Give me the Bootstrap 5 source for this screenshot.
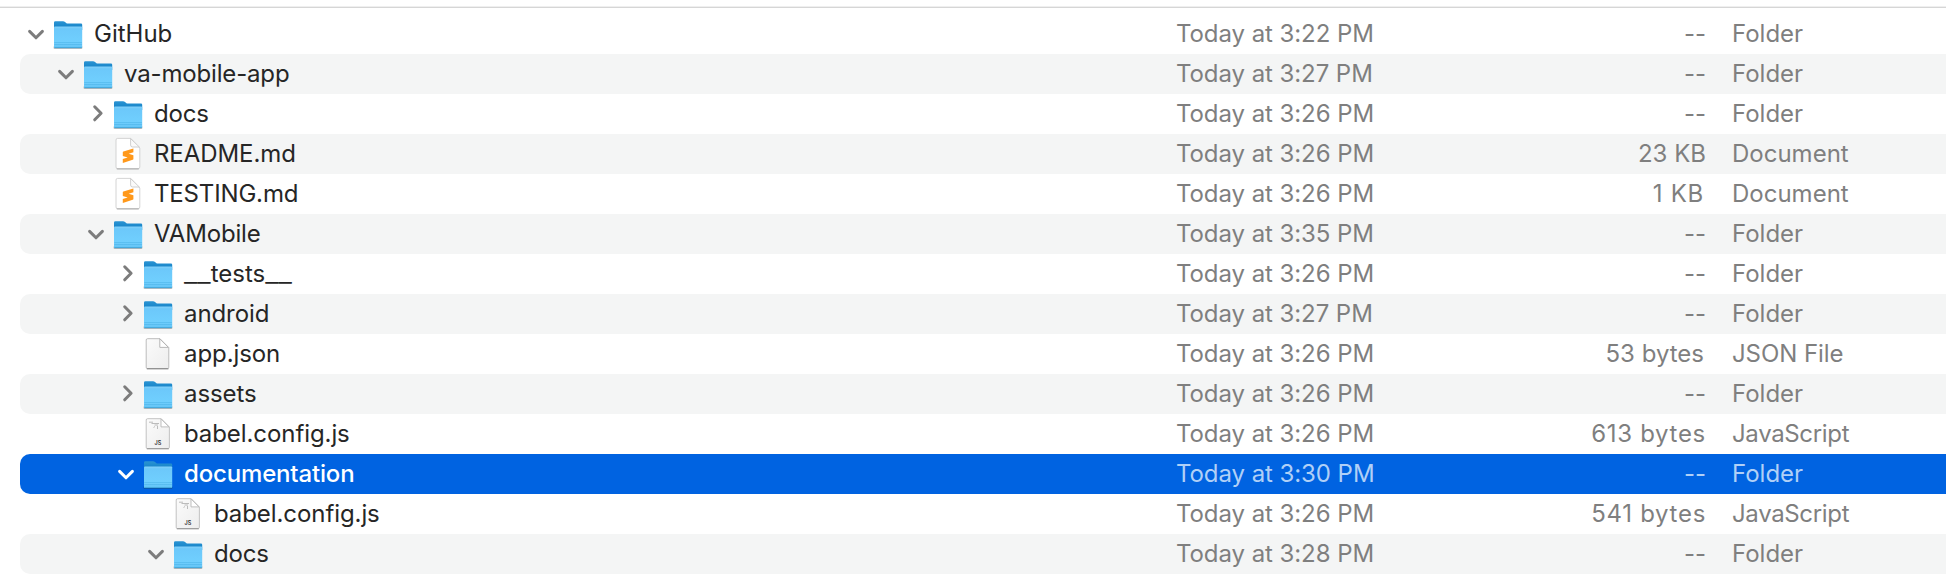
<!DOCTYPE html>
<html lang="en">
<head>
<meta charset="utf-8">
<meta name="viewport" content="width=device-width, initial-scale=1">
<title>GitHub</title>
<link href="https://cdn.jsdelivr.net/npm/bootstrap@5.3.0/dist/css/bootstrap.min.css" rel="stylesheet">
<style>
  body { font-family: Inter, "Liberation Sans", sans-serif; font-size: 24px; line-height: 40px; background: #fff; color: #262626; }
  .file-pane { height: 580px; padding-top: 6px; }
  .pane-rule { height: 2px; background: linear-gradient(#efefef 50%, #d6d6d6 50%); margin-bottom: 6px; }
  .file-list { padding-left: 20px; }
  .file-row { height: 40px; border-radius: 10px 0 0 10px; color: #7f7f7f; white-space: nowrap; }
  .file-row:nth-child(even) { background: #f4f5f5; }
  .file-row.picked { background: #0063e1; color: #b0d0f7; }
  .file-name { width: 1156px; color: #262626; }
  .picked .file-name { color: #fff; font-weight: 500; }
  .lvl-0 { padding-left: 6px; }
  .lvl-1 { padding-left: 36px; }
  .lvl-2 { padding-left: 66px; }
  .lvl-3 { padding-left: 96px; }
  .lvl-4 { padding-left: 126px; }
  .twist { width: 20px; height: 40px; margin-right: 6px; color: #7c7c7c; }
  .picked .twist { color: #fff; }
  .kind-icon { width: 32px; height: 40px; margin-right: 10px; }
  .file-date { width: 350px; letter-spacing: -.07px; }
  .file-size { width: 180px; }
  .file-kind { padding-left: 26px; }
  .t1 { letter-spacing: -.08px; }
  .t2 { letter-spacing: -.16px; }
  .t3 { letter-spacing: -.34px; }
  .w1 { letter-spacing: .7px; }
  .inset-end { padding-right: 2px; }
  .under { font-size: 29.8px; font-weight: 300; line-height: 0; }
  .js-tag { font: 600 5.5px Inter, sans-serif; }
</style>
</head>
<body>
<svg width="0" height="0" class="position-absolute" aria-hidden="true">
  <defs>
    <linearGradient id="gFront" x1="0" y1="0" x2="0" y2="1"><stop offset="0" stop-color="#86d1f9"/><stop offset=".1" stop-color="#6cc8fa"/><stop offset=".72" stop-color="#70cffe"/><stop offset="1" stop-color="#62c3f5"/></linearGradient>
    <linearGradient id="gBack" x1="0" y1="0" x2="0" y2="1"><stop offset="0" stop-color="#2a93d3"/><stop offset="1" stop-color="#0f7fc4"/></linearGradient>
    <linearGradient id="gPaper" x1="0" y1="0" x2="1" y2="1"><stop offset="0" stop-color="#fbfbfb"/><stop offset="1" stop-color="#ededed"/></linearGradient>
  </defs>
  <symbol id="down" viewBox="0 0 20 40"><path d="M3.6 17.4 10 23.8 16.4 17.4" fill="none" stroke="currentColor" stroke-width="3" stroke-linecap="round" stroke-linejoin="round"/></symbol>
  <symbol id="right" viewBox="0 0 20 40"><path d="M8.7 12.8 15.1 19.3 8.7 25.8" fill="none" stroke="currentColor" stroke-width="3" stroke-linecap="round" stroke-linejoin="round"/></symbol>
  <symbol id="folder" viewBox="0 0 32 40">
    <path d="M1.6 32.5V34q0 1.1 1.2 1.1h26.4q1.2 0 1.2-1.1v-1.5z" fill="#000" opacity=".25"/>
    <path d="M2 8.600Q2 7.200 3.400 7.200H11q1.200 0 2 .8l1.200 1.100q.6.5 1.500.5H29q1.200 0 1.200 1.200V16H2z" fill="url(#gBack)"/>
    <path d="M2 13.600q0-1 1-1h26.200q1 0 1 1v19.300q0 1.200-1.200 1.200H3.200Q2 34.100 2 32.900z" fill="url(#gFront)"/>
    <path d="M2.300 28.500h27.600M2.300 30.500h27.600" stroke="#3aa5dc" stroke-width=".7" opacity=".5"/>
    <path d="M2.400 33.700h27.400" stroke="#3b9fd3" stroke-width=".9"/>
  </symbol>
  <symbol id="sublime" viewBox="0 0 32 40">
    <path d="M4 6q0-1.600 1.600-1.600H18.800L27.800 14V33q0 1.800-1.800 1.800H5.800Q4 34.800 4 33z" fill="#fff" stroke="#c9c9c9" stroke-width=".8"/>
    <path d="M4.800 34.900h22" stroke="#a9a9a9" stroke-width="1"/>
    <path d="M18.600 4.600V11q0 2 2 2h6.800z" fill="#fafafa" stroke="#c4c4c4" stroke-width=".8"/>
    <path d="M21.400 14.400V18.200l-4.800 1.600 4.800 1.500v3.600q0 .7-.7.900L10.800 28.900v-3.900l4.900-1.600-4.900-1.500v-3.600q0-.6.6-.8z" fill="#ff981a"/>
  </symbol>
  <symbol id="paper" viewBox="0 0 32 40">
    <path d="M4.200 6q0-1.300 1.300-1.300H18l8.800 8.900V33.300q0 1.200-1.200 1.200H5.400q-1.200 0-1.200-1.200z" fill="url(#gPaper)" stroke="#b4b4b4" stroke-width=".9"/>
    <path d="M4.800 34.800h21.600" stroke="#858585" stroke-width="1.100"/>
    <path d="M17.800 4.900v8.500h8.600z" fill="#fff" stroke="#b0b0b0" stroke-width=".9"/>
  </symbol>
  <symbol id="script" viewBox="0 0 32 40">
    <path d="M4.200 6q0-1.300 1.300-1.300H19.200l8.200 8.300V33.300q0 1.200-1.200 1.200H5.400q-1.200 0-1.200-1.200z" fill="url(#gPaper)" stroke="#bcbcbc" stroke-width=".9"/>
    <path d="M4.800 34.800h22" stroke="#909090" stroke-width="1"/>
    <path d="M7 8.200h4M9.500 9.500h7.500M12.500 11h3.500M13 12.500l-1.500 1M15.500 12v3" stroke="#b4b4b4" stroke-width=".9" fill="none"/>
    <path d="M19 4.900v8h8z" fill="#fff" stroke="#b8b8b8" stroke-width=".9"/>
    <text class="js-tag" x="12.500" y="30.900" fill="#333">JS</text>
  </symbol>
</svg>

<main class="file-pane overflow-hidden">
  <div class="pane-rule"></div>
  <ul class="file-list list-unstyled mb-0">
    <li class="file-row d-flex"><div class="file-name lvl-0 d-flex flex-shrink-0"><svg class="twist"><use href="#down"/></svg><svg class="kind-icon"><use href="#folder"/></svg><span>GitHub</span></div><div class="file-date flex-shrink-0">Today at 3:22 PM</div><div class="file-size text-end">--</div><div class="file-kind">Folder</div></li>
    <li class="file-row d-flex"><div class="file-name lvl-1 d-flex flex-shrink-0"><svg class="twist"><use href="#down"/></svg><svg class="kind-icon"><use href="#folder"/></svg><span class="t2">va-mobile-app</span></div><div class="file-date flex-shrink-0">Today at 3:27 PM</div><div class="file-size text-end">--</div><div class="file-kind">Folder</div></li>
    <li class="file-row d-flex"><div class="file-name lvl-2 d-flex flex-shrink-0"><svg class="twist"><use href="#right"/></svg><svg class="kind-icon"><use href="#folder"/></svg><span class="t2">docs</span></div><div class="file-date flex-shrink-0">Today at 3:26 PM</div><div class="file-size text-end">--</div><div class="file-kind">Folder</div></li>
    <li class="file-row d-flex"><div class="file-name lvl-2 d-flex flex-shrink-0"><span class="twist"></span><svg class="kind-icon"><use href="#sublime"/></svg><span class="t1">README.md</span></div><div class="file-date flex-shrink-0">Today at 3:26 PM</div><div class="file-size text-end">23 KB</div><div class="file-kind">Document</div></li>
    <li class="file-row d-flex"><div class="file-name lvl-2 d-flex flex-shrink-0"><span class="twist"></span><svg class="kind-icon"><use href="#sublime"/></svg><span class="t2">TESTING.md</span></div><div class="file-date flex-shrink-0">Today at 3:26 PM</div><div class="file-size text-end w1 inset-end">1 KB</div><div class="file-kind">Document</div></li>
    <li class="file-row d-flex"><div class="file-name lvl-2 d-flex flex-shrink-0"><svg class="twist"><use href="#down"/></svg><svg class="kind-icon"><use href="#folder"/></svg><span class="t2">VAMobile</span></div><div class="file-date flex-shrink-0">Today at 3:35 PM</div><div class="file-size text-end">--</div><div class="file-kind">Folder</div></li>
    <li class="file-row d-flex"><div class="file-name lvl-3 d-flex flex-shrink-0"><svg class="twist"><use href="#right"/></svg><svg class="kind-icon"><use href="#folder"/></svg><span><span class="under">__</span>tests<span class="under">__</span></span></div><div class="file-date flex-shrink-0">Today at 3:26 PM</div><div class="file-size text-end">--</div><div class="file-kind">Folder</div></li>
    <li class="file-row d-flex"><div class="file-name lvl-3 d-flex flex-shrink-0"><svg class="twist"><use href="#right"/></svg><svg class="kind-icon"><use href="#folder"/></svg><span class="t1">android</span></div><div class="file-date flex-shrink-0">Today at 3:27 PM</div><div class="file-size text-end">--</div><div class="file-kind">Folder</div></li>
    <li class="file-row d-flex"><div class="file-name lvl-3 d-flex flex-shrink-0"><span class="twist"></span><svg class="kind-icon"><use href="#paper"/></svg><span class="t1">app.json</span></div><div class="file-date flex-shrink-0">Today at 3:26 PM</div><div class="file-size text-end inset-end">53 bytes</div><div class="file-kind t1">JSON File</div></li>
    <li class="file-row d-flex"><div class="file-name lvl-3 d-flex flex-shrink-0"><svg class="twist"><use href="#right"/></svg><svg class="kind-icon"><use href="#folder"/></svg><span class="t1">assets</span></div><div class="file-date flex-shrink-0">Today at 3:26 PM</div><div class="file-size text-end">--</div><div class="file-kind">Folder</div></li>
    <li class="file-row d-flex"><div class="file-name lvl-3 d-flex flex-shrink-0"><span class="twist"></span><svg class="kind-icon"><use href="#script"/></svg><span class="t1">babel.config.js</span></div><div class="file-date flex-shrink-0">Today at 3:26 PM</div><div class="file-size text-end w1">613 bytes</div><div class="file-kind t3">JavaScript</div></li>
    <li class="file-row picked d-flex"><div class="file-name lvl-3 d-flex flex-shrink-0"><svg class="twist"><use href="#down"/></svg><svg class="kind-icon"><use href="#folder"/></svg><span class="t2">documentation</span></div><div class="file-date flex-shrink-0">Today at 3:30 PM</div><div class="file-size text-end">--</div><div class="file-kind">Folder</div></li>
    <li class="file-row d-flex"><div class="file-name lvl-4 d-flex flex-shrink-0"><span class="twist"></span><svg class="kind-icon"><use href="#script"/></svg><span class="t1">babel.config.js</span></div><div class="file-date flex-shrink-0">Today at 3:26 PM</div><div class="file-size text-end w1">541 bytes</div><div class="file-kind t3">JavaScript</div></li>
    <li class="file-row d-flex"><div class="file-name lvl-4 d-flex flex-shrink-0"><svg class="twist"><use href="#down"/></svg><svg class="kind-icon"><use href="#folder"/></svg><span class="t2">docs</span></div><div class="file-date flex-shrink-0">Today at 3:28 PM</div><div class="file-size text-end">--</div><div class="file-kind">Folder</div></li>
  </ul>
</main>
<script src="https://cdn.jsdelivr.net/npm/bootstrap@5.3.0/dist/js/bootstrap.bundle.min.js"></script>
</body>
</html>
